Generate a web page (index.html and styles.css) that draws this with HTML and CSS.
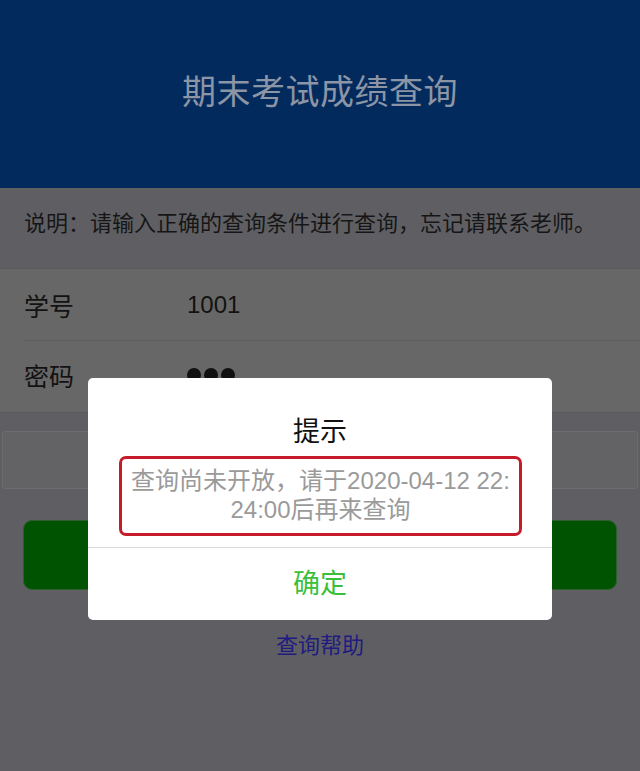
FILE: index.html
```html
<!DOCTYPE html>
<html lang="zh-CN">
<head>
<meta charset="utf-8">
<title>期末考试成绩查询</title>
<link rel="stylesheet" href="styles.css">
</head>
<body>
<header class="header"><h1 class="title">期末考试成绩查询</h1></header>
<div class="notice">说明：请输入正确的查询条件进行查询，忘记请联系老师。</div>
<div class="form">
  <div class="row"><span class="label">学号</span><span class="value">1001</span></div>
  <div class="row row-last"><span class="label">密码</span><span class="dots"><i></i><i></i><i></i></span></div>
</div>
<div class="input-box"></div>
<div class="btn"></div>
<div class="help"><a class="help-link">查询帮助</a></div>

<div class="dialog">
  <div class="dialog-title">提示</div>
  <div class="dialog-msg">查询尚未开放，请于2020-04-12 22:<br>24:00后再来查询</div>
  <div class="dialog-btn">确定</div>
</div>
</body>
</html>
```
FILE: styles.css
```css
html, body {
  margin: 0;
  padding: 0;
}
body {
  width: 640px;
  height: 771px;
  overflow: hidden;
  background: #5f5f63;
  font-family: "Liberation Sans", "Noto Sans CJK SC", sans-serif;
  color: #141414;
  position: relative;
}
.header {
  height: 188px;
  background: #032a5c;
  display: flex;
  align-items: center;
  justify-content: center;
}
.title {
  margin: 0;
  font-weight: normal;
  font-size: 34px;
  color: #8b95a6;
  letter-spacing: 0.5px;
  padding-bottom: 10px;
}
.notice {
  height: 81px;
  display: flex;
  align-items: center;
  padding-left: 24px;
  font-size: 22px;
  color: #161616;
  padding-bottom: 14px;
  box-sizing: border-box;
  border-bottom: 1px solid #59595b;
}
.form {
  background: #676767;
  border-bottom: 1px solid #59595b;
}
.row {
  height: 71px;
  margin-left: 24px;
  display: flex;
  align-items: center;
  border-bottom: 1px solid #5c5c5c;
  font-size: 25px;
  color: #121212;
}
.row-last {
  border-bottom: none;
  padding-bottom: 3px;
  box-sizing: border-box;
}
.label {
  width: 163px;
}
.value {
  font-size: 24px;
}
.dots {
  display: flex;
  gap: 3px;
}
.dots i {
  width: 14px;
  height: 14px;
  border-radius: 50%;
  background: #111;
}
.input-box {
  margin: 18px 2px 0;
  height: 56px;
  border: 1px solid #6c6c6f;
  border-radius: 3px;
  background: #636366;
}
.btn {
  margin: 31px 23px 0 23px;
  height: 68px;
  border: 1px solid #2f5e2f;
  border-radius: 9px;
  background: #005300;
}
.help {
  margin-top: 42px;
  text-align: center;
  font-size: 22px;
  line-height: 28px;
}
.help-link {
  color: #1f1b80;
}
.dialog {
  position: absolute;
  left: 88px;
  top: 378px;
  width: 464px;
  height: 242px;
  background: #fff;
  border-radius: 5px;
  display: flex;
  flex-direction: column;
}
.dialog-title {
  margin-top: 36px;
  height: 36px;
  line-height: 36px;
  text-align: center;
  font-size: 27px;
  color: #111;
}
.dialog-msg {
  margin: 6px 30px 0 31px;
  height: 80px;
  box-sizing: border-box;
  border: 3px solid #c51b2b;
  border-radius: 7px;
  display: flex;
  align-items: center;
  justify-content: center;
  text-align: center;
  font-size: 24px;
  line-height: 29px;
  color: #9a9a9a;
  padding-bottom: 2px;
}
.dialog-btn {
  margin-top: 11px;
  border-top: 1px solid #dcdcdc;
  flex: 1;
  display: flex;
  align-items: center;
  justify-content: center;
  font-size: 27px;
  color: #3bbf3b;
  padding-bottom: 5px;
}
```
